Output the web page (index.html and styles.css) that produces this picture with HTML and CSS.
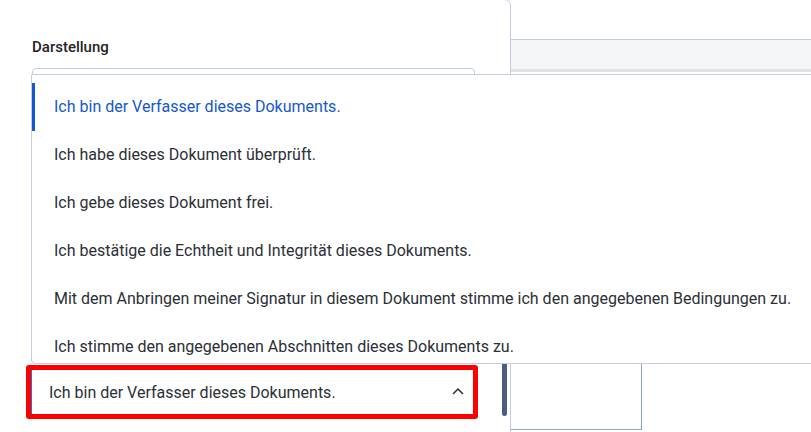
FILE: index.html
```html
<!DOCTYPE html>
<html lang="de">
<head>
    <meta charset="UTF-8">
    <meta name="viewport" content="width=device-width, initial-scale=1.0">
    <title>Signatur – Darstellung</title>
    <link rel="stylesheet" href="styles.css">
</head>
<body>
    <div class="page">
        <div class="panel">
            <label class="field-label">Darstellung</label>
            <div class="field"></div>

            <div class="select-wrap">
                <div class="select">
                    <span>Ich bin der Verfasser dieses Dokuments.</span>
                    <svg class="chevron" width="12" height="8" viewBox="0 0 12 8">
                        <path d="M1 7 L6 2 L11 7" fill="none" stroke="#2b2f36" stroke-width="1.5"/>
                    </svg>
                </div>
            </div>
            <div class="scroll-thumb"></div>
        </div>

        <div class="side">
            <div class="toolbar"></div>
            <div class="preview"></div>
        </div>

        <!-- Aufgeklappte Liste der Select-Optionen -->
        <ul class="options">
            <li class="option active">Ich bin der Verfasser dieses Dokuments.</li>
            <li class="option">Ich habe dieses Dokument überprüft.</li>
            <li class="option">Ich gebe dieses Dokument frei.</li>
            <li class="option">Ich bestätige die Echtheit und Integrität dieses Dokuments.</li>
            <li class="option">Mit dem Anbringen meiner Signatur in diesem Dokument stimme ich den angegebenen Bedingungen zu.</li>
            <li class="option">Ich stimme den angegebenen Abschnitten dieses Dokuments zu.</li>
        </ul>
    </div>
</body>
</html>
```

FILE: styles.css
```css
/* Styles généraux */
body {
    font-family: Roboto, "Liberation Sans", sans-serif;
    background-color: #ffffff;
    margin: 0;
    padding: 0;
    width: 811px;
    height: 432px;
    overflow: hidden;
}

.page {
    position: relative;
    display: flex;
    height: 432px;
}

/* Panneau de gauche */
.panel {
    position: relative;
    box-sizing: border-box;
    width: 512px;
    height: 440px;
    margin: -1px 0 0 -1px;
    padding: 37px 0 0 32px;
    border: 1px solid #c3cddf;
    border-radius: 0 7px 0 0;
    background-color: white;
}

.field-label {
    display: block;
    font-size: 15px;
    font-weight: 500;
    line-height: 20px;
    color: #1f2329;
}

.field {
    width: 443px;
    height: 44px;
    margin-top: 11px;
    box-sizing: border-box;
    border: 1px solid #c3cddf;
    border-radius: 4px;
}

.select-wrap {
    width: 452px;
    margin: 253px 0 0 -6px;
    box-sizing: border-box;
    border: 5px solid #ff0000;
    border-radius: 3px;
}

.select {
    display: flex;
    align-items: center;
    justify-content: space-between;
    height: 44px;
    padding: 0 9px 0 17px;
    border-left: 1px solid #2f6fd8;
    font-size: 16px;
    color: #2b2f36;
}

.chevron {
    margin-top: -2px;
}

.scroll-thumb {
    position: absolute;
    left: 502px;
    top: 300px;
    width: 5px;
    height: 116px;
    border-radius: 3px;
    background-color: #4a5e7e;
}

/* Partie droite */
.side {
    flex: 1;
    padding-top: 39px;
}

.toolbar {
    height: 29px;
    border-top: 1px solid #c3cddf;
    border-bottom: 3px solid #e2e3e4;
    background-color: #f4f5f7;
}

.preview {
    width: 130px;
    height: 117px;
    margin: 240px 0 0 -1px;
    border: 1px solid #8aa6c8;
    border-top: none;
}

/* Liste déroulante */
.options {
    position: absolute;
    left: 31px;
    top: 74px;
    box-sizing: border-box;
    width: 800px;
    height: 290px;
    margin: 0;
    padding: 8px 0 0;
    list-style: none;
    overflow: hidden;
    background-color: white;
    border: 1px solid #c3cddf;
    border-radius: 0 0 0 4px;
}

.option {
    height: 48px;
    line-height: 48px;
    padding-left: 22px;
    font-size: 16px;
    color: #2b2f36;
    white-space: nowrap;
}

.option.active {
    color: #1457d0;
    box-shadow: inset 3px 0 0 #1457d0;
}
```
